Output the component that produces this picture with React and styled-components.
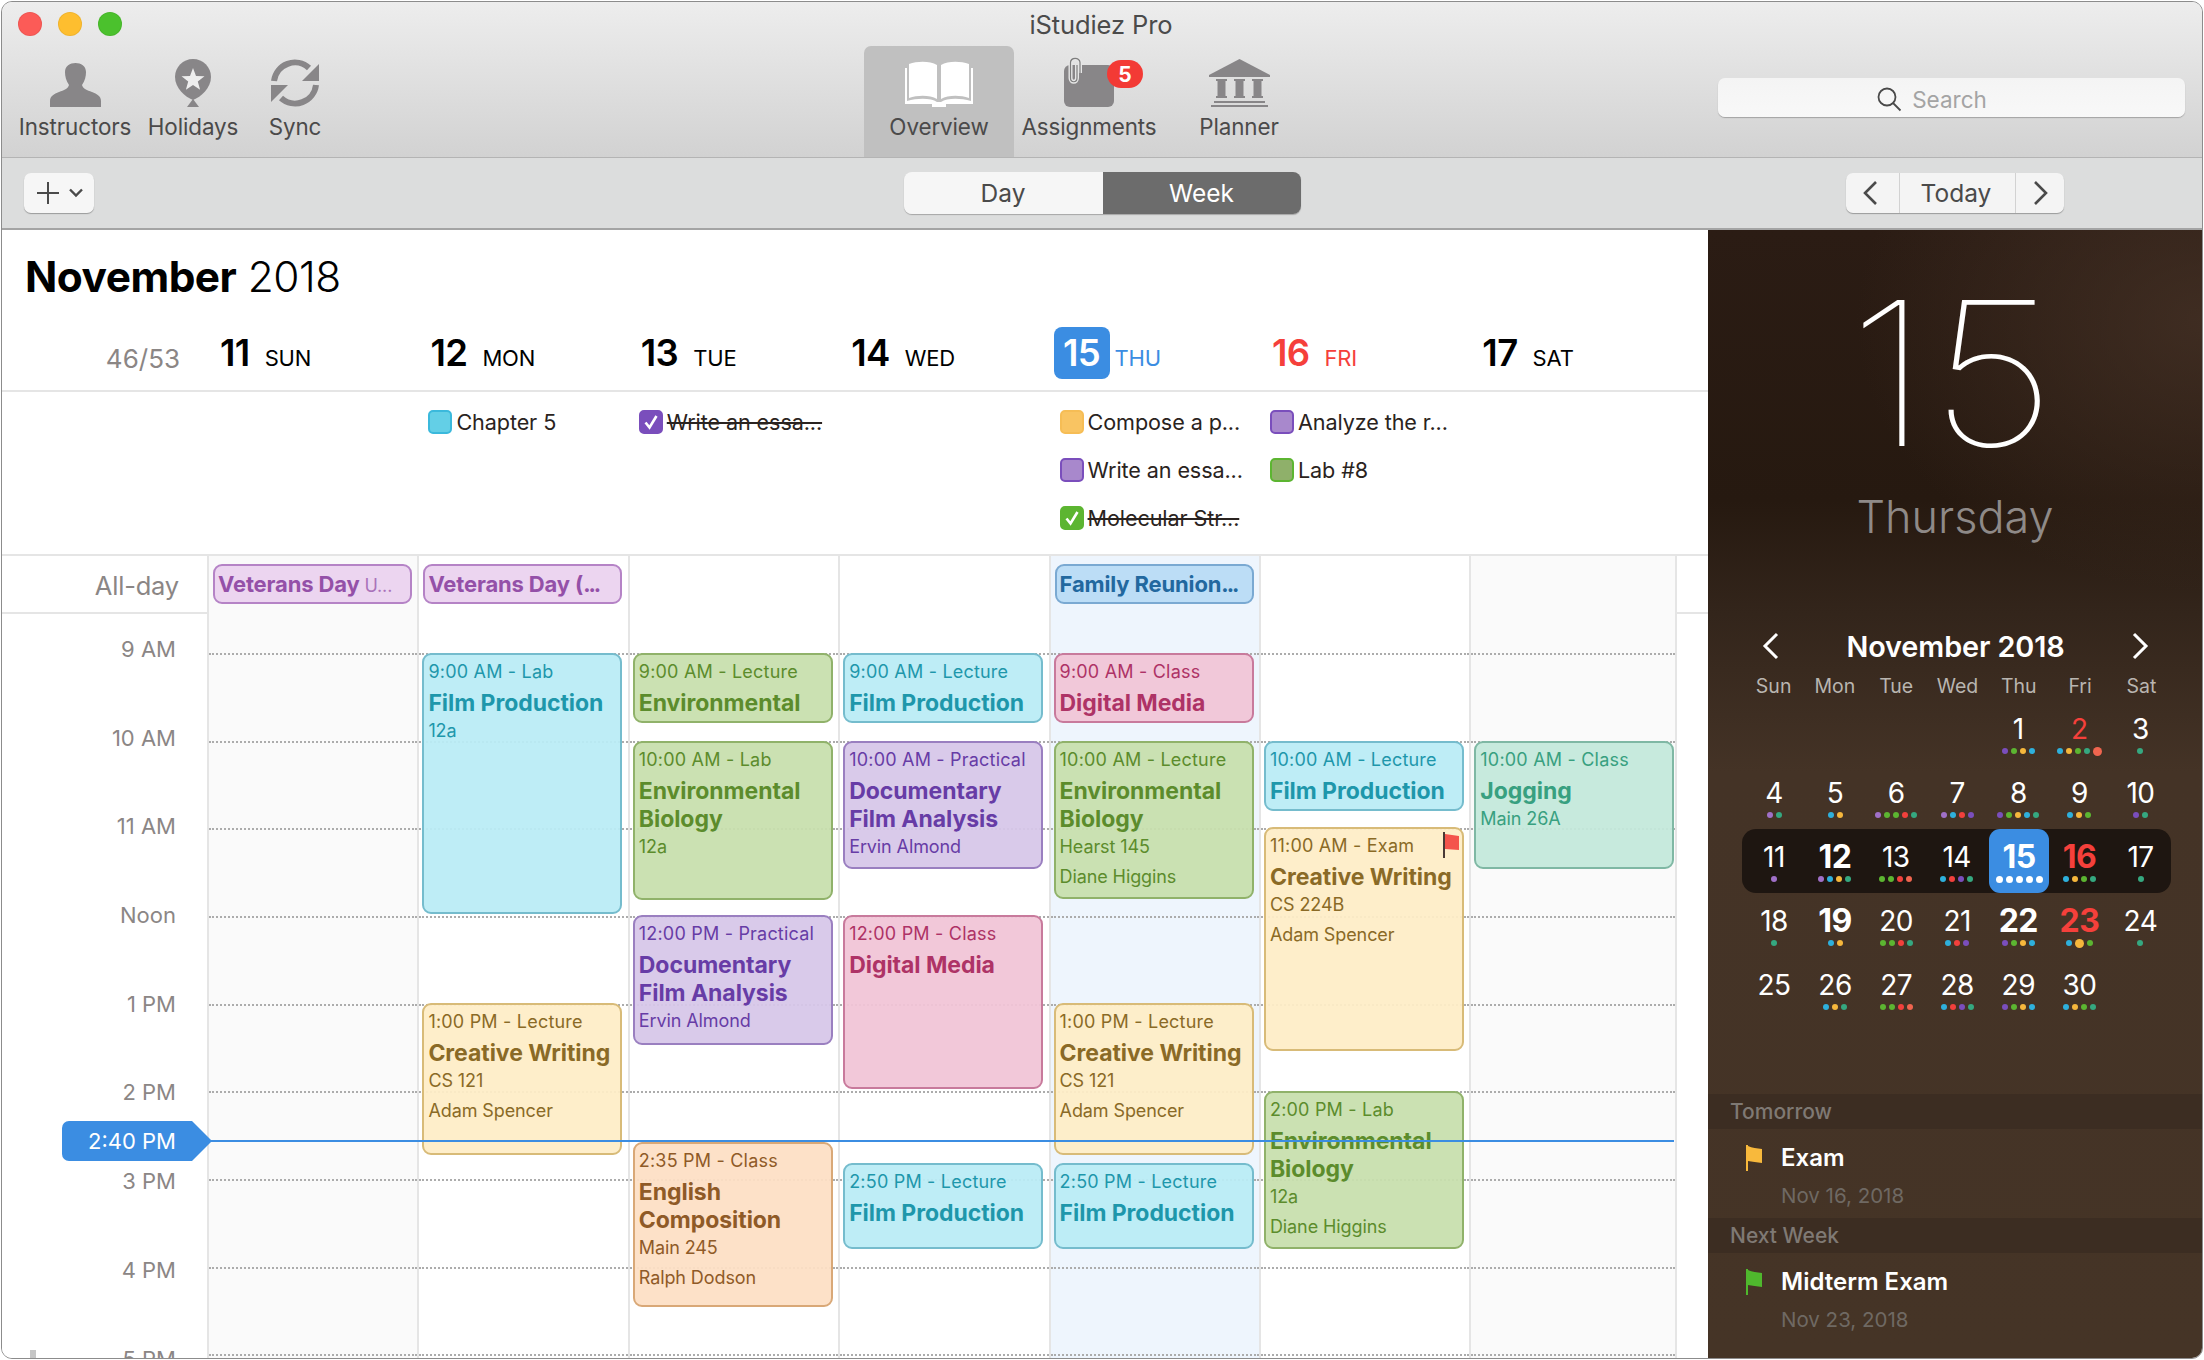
import React from 'react';
import styled, { createGlobalStyle } from 'styled-components';

const Global = createGlobalStyle`
  html, body { margin: 0; padding: 0; background: #fff; }
  * { box-sizing: border-box; }
  body { font-family: Inter, "Noto Sans", "Liberation Sans", sans-serif; -webkit-font-smoothing: antialiased; }
`;

const COLS = '205px repeat(6, 210.4px) 208px';

const Window = styled.div`
  position: relative; width: 2202px; height: 1358px; margin: 1px;
  border: 1px solid #8c8c8c; border-radius: 11px; overflow: hidden;
  display: flex; flex-direction: column; background: #fff;
`;
const TitleBar = styled.header`
  height: 156px; flex: none; border-bottom: 1px solid #b4b4b4;
  background: linear-gradient(180deg, #ededed 0%, #d2d2d2 100%);
  display: flex; flex-direction: column;
`;
const TitleRow = styled.div`
  height: 44px; flex: none; display: grid; grid-template-columns: 1fr auto 1fr; align-items: center; padding: 0 18px 0 16px;
`;
const Lights = styled.div`display: flex; gap: 16px;`;
const Light = styled.span`width: 24px; height: 24px; border-radius: 50%; background: ${p => p.$c}; box-shadow: inset 0 0 0 1px rgba(0,0,0,.06);`;
const AppTitle = styled.div`font-size: 25.5px; color: #4b4b4b; letter-spacing: -.1px;`;
const ToolRow = styled.div`flex: 1; display: flex; padding-left: 13px; padding-right: 17px;`;
const ToolGroup = styled.div`display: flex; margin-left: ${p => p.$ml || 0}px;`;
const Tool = styled.div`
  width: ${p => p.$w || 150}px; position: relative; display: flex; flex-direction: column; align-items: center; justify-content: flex-end;
  padding-bottom: 17px; border-radius: 7px 7px 0 0; background: ${p => p.$active ? '#c0c0c0' : 'transparent'};
`;
const ToolIcon = styled.div`height: 50px; display: flex; align-items: flex-end; justify-content: center; position: relative;`;
const ToolLabel = styled.div`font-size: 22.4px; line-height: 26px; margin-top: 7px; color: #4b4a4a; white-space: nowrap; letter-spacing: -.1px;`;
const Badge = styled.span`
  position: absolute; left: 43px; top: 3px; width: 36px; height: 28px; border-radius: 14px; background: #f33a35;
  color: #fff; font-size: 21px; font-weight: 700; display: flex; align-items: center; justify-content: center;
`;
const SearchBox = styled.div`
  margin-left: auto; margin-top: 32px; width: 467px; height: 39px; border-radius: 7px; background: linear-gradient(180deg, #f4f4f4, #f8f8f8);
  box-shadow: 0 1px 1px rgba(0,0,0,.25); display: flex; align-items: center; justify-content: center; gap: 10px; color: #a4a4a4; font-size: 22.5px;
  padding: 3px 40px 0 0;
`;
const Toolbar = styled.div`
  height: 72px; flex: none; border-bottom: 2px solid #a4a4a4; background: #dcdddd;
  display: grid; grid-template-columns: 1fr auto 1fr; align-items: center; padding: 0 22px;
`;
const PlainBtn = styled.div`
  width: 70px; height: 40px; border-radius: 7px; background: #f6f6f6; box-shadow: 0 1px 1px rgba(0,0,0,.3);
  display: flex; align-items: center; justify-content: center; gap: 9px;
`;
const Segments = styled.div`
  display: flex; width: 397px; height: 42px; border-radius: 8px; overflow: hidden; box-shadow: 0 1px 1px rgba(0,0,0,.25);
`;
const Segment = styled.div`
  width: ${p => p.$w}px; display: flex; align-items: center; justify-content: center; font-size: 24.5px;
  background: ${p => p.$on ? '#6c6c6c' : '#f6f6f6'}; color: ${p => p.$on ? '#fff' : '#4a4a4a'};
`;
const NavGroup = styled.div`
  justify-self: end; margin-right: 116px; display: flex; width: 218px; height: 40px; border-radius: 7px; background: #f4f4f4; box-shadow: 0 1px 1px rgba(0,0,0,.3); overflow: hidden;
`;
const NavCell = styled.div`
  width: ${p => p.$w}px; display: flex; align-items: center; justify-content: center; font-size: 24.5px; color: #4a4a4a;
  border-left: ${p => p.$sep ? '1px solid #d2d2d2' : 'none'}; padding: 0 ${p => p.$pr || 0}px 0 ${p => p.$pl || 0}px;
`;
const Body = styled.div`flex: 1; display: flex; min-height: 0;`;
const Main = styled.main`position: relative; width: 1706px; flex: none; display: flex; flex-direction: column; background: #fff;`;
const Head = styled.div`height: 162px; flex: none; border-bottom: 2px solid #e5e5e5; padding: 20px 0 0 23px;`;
const MonthTitle = styled.div`
  font-size: 42.4px; line-height: 54px; color: #000; font-weight: 300; letter-spacing: -.5px;
  b { font-weight: 700; }
`;
const WeekGrid = styled.div`display: grid; grid-template-columns: ${COLS}; margin: 23px 0 0 -23px; height: 52px;`;
const WeekNo = styled.div`font-size: 26px; line-height: 52px; text-align: right; padding: 6px 27px 0 0; color: #8b8685;`;
const DayHead = styled.div`
  display: flex; align-items: baseline; gap: ${p => p.$today ? 5 : 15}px; padding-left: ${p => p.$today ? 5 : 13}px;
  color: ${p => p.$c};
`;
const DayNum = styled.span`
  font-size: 36.5px; line-height: 52px; font-weight: 600; letter-spacing: -.6px;
  ${p => p.$today && 'width: 56px; text-align: center; border-radius: 8px; background: #3b8de2; color: #fff;'}
`;
const DayName = styled.span`font-size: 22px; line-height: 52px; letter-spacing: -.2px;`;
const TaskRow = styled.div`height: 164px; flex: none; border-bottom: 2px solid #e5e5e5; display: grid; grid-template-columns: ${COLS};`;
const TaskCell = styled.div`padding: 18px 0 0 11px; display: flex; flex-direction: column; gap: 24px;`;
const Task = styled.div`display: flex; align-items: center; gap: 4px; height: 24px;`;
const Check = styled.span`
  width: 24px; height: 24px; flex: none; border-radius: 5px; background: ${p => p.$bg}; border: 2px solid ${p => p.$b};
  display: flex; align-items: center; justify-content: center;
`;
const TaskText = styled.span`
  font-size: 21.6px; line-height: 28px; color: #2a2320; white-space: nowrap; letter-spacing: -.1px;
  ${p => p.$done && 'text-decoration: line-through; text-decoration-thickness: 2px;'}
`;
const AllDayRow = styled.div`height: 58px; flex: none; border-bottom: 2px solid #e5e5e5; display: grid; grid-template-columns: ${COLS};`;
const AllDayLabel = styled.div`font-size: 25.5px; line-height: 60px; text-align: right; padding-right: 28px; color: #8b8685; letter-spacing: -.2px;`;
const AllDayCell = styled.div`
  border-left: 2px solid #e5e5e5; ${p => p.$last && 'border-right: 2px solid #e5e5e5;'} padding: 8px 0 0 4px; background: ${p => p.$bg};
`;
const Pill = styled.div`
  width: 199px; height: 40px; border-radius: 9px; border: 2px solid ${p => p.$b}; background: ${p => p.$bg}; color: ${p => p.$c};
  font-size: 22px; line-height: 36px; font-weight: 700; padding-left: 3px; white-space: nowrap; overflow: hidden; letter-spacing: -.15px;
  small { font-size: 18px; font-weight: 400; opacity: .75; }
`;
const PillDots = styled.span`letter-spacing: -2px;`;
const Timeline = styled.div`position: relative; flex: 1; min-height: 0; overflow: hidden; display: grid; grid-template-columns: ${COLS};`;
const Gutter = styled.div`padding: 20px 31px 0 0; text-align: right;`;
const HourLabel = styled.div`height: 88.7px; font-size: 22px; line-height: 30px; color: #8b8685; white-space: nowrap;`;
const DayCol = styled.div`
  position: relative; padding-top: 39px; border-left: 2px solid #e5e5e5; ${p => p.$last && 'border-right: 2px solid #e5e5e5;'} background: ${p => p.$bg};
`;
const HourLine = styled.div`height: 87.67px; border-top: 2px dotted #acacac;`;
const Event = styled.div`
  position: absolute; left: 3px; width: 200px; border: 2px solid ${p => p.$p.b}; border-radius: 9px; background: ${p => p.$p.bg};
  color: ${p => p.$p.c}; padding: 4px 4px 0; overflow: hidden;
`;
const EvTime = styled.div`font-size: 18px; line-height: 26px; white-space: nowrap; letter-spacing: .2px;`;
const EvTitle = styled.div`font-size: 23px; line-height: 28px; font-weight: 700; margin-top: 4px; letter-spacing: -.05px; white-space: nowrap;`;
const EvDetail = styled.div`font-size: 18px; line-height: 28px; margin-top: ${p => p.$gap || 0}px; white-space: nowrap; letter-spacing: -.1px;`;
const EvFlag = styled.svg`position: absolute; right: 3px; top: 3px;`;
const NowBadge = styled.div`
  position: absolute; left: 60px; top: 507px; width: 150px; height: 40px; background: #3b8de2; color: #fff; border-radius: 7px;
  clip-path: polygon(0 0, 130px 0, 150px 20px, 130px 40px, 0 40px);
  font-size: 22px; line-height: 40px; text-align: center; padding-right: 10px; z-index: 3;
`;
const NowLine = styled.div`position: absolute; left: 205px; width: 1467px; top: 526px; height: 2px; background: #3b8de2; z-index: 3;`;
const Notch = styled.div`position: absolute; left: 28px; bottom: 0; width: 6px; height: 8px; background: #c6c6c6; z-index: 4;`;
const Side = styled.aside`
  flex: 1; display: flex; flex-direction: column; color: #fff; min-width: 0;
  background:
    radial-gradient(ellipse 70% 24% at 100% 8%, rgba(72,52,40,.7), transparent 100%),
    linear-gradient(180deg, #2b1c14 0, #261910 24%, #33251b 34%, #443326 48%, #453426 100%);
`;
const BigDay = styled.div`
  font-size: 200px; line-height: 200px; font-weight: 100; text-align: center; margin-top: 43px; padding-right: 6px; height: 200px;
  transform: scaleX(1.12);
`;
const WeekDayName = styled.div`font-size: 45px; line-height: 50px; text-align: center; color: #8f8a88; font-weight: 300; margin-top: 19px;`;
const MiniHead = styled.div`
  margin-top: 84px; display: flex; align-items: center; justify-content: space-between; padding: 0 53px 0 54px; height: 40px;
  font-size: 28.8px; font-weight: 600; letter-spacing: -.1px;
`;
const Dow = styled.div`
  margin: 8px 0 3px 35px; width: 429px; display: grid; grid-template-columns: repeat(7, 1fr); font-size: 19.5px; line-height: 24px; color: #b9b5b0; text-align: center;
`;
const MiniRow = styled.div`
  margin-left: 34px; width: 429px; height: 64px; padding-left: 1.5px; display: grid; grid-template-columns: repeat(7, 1fr);
  ${p => p.$cur && 'background: #1e1611; border-radius: 14px;'}
`;
const MiniCell = styled.div`
  justify-self: center; width: 60px; height: 64px; padding-top: 12px; display: flex; flex-direction: column; align-items: center; border-radius: 11px;
  ${p => p.$sel && 'background: #3b8de2; margin-left: 2px;'}
  color: ${p => p.$red ? '#f5403b' : '#fff'};
`;
const MiniNum = styled.div`font-size: ${p => p.$bold ? 32 : 28}px; line-height: 32px; font-weight: ${p => p.$bold ? 700 : 400}; letter-spacing: -.5px;`;
const Dots = styled.div`display: flex; gap: 3px; height: 8px; align-items: center; margin-top: 2px; justify-content: center;`;
const Dot = styled.span`width: ${p => p.$s}px; height: ${p => p.$s}px; border-radius: 50%; background: ${p => p.$c}; flex: none;`;
const Agenda = styled.div`margin-top: auto;`;
const Band = styled.div`height: 35px; background: #3c2d22; padding-left: 22px; font-size: 21px; line-height: 35px; color: #7f7974; font-weight: 500;`;
const AgendaItem = styled.div`height: ${p => p.$h}px; display: flex; gap: 19px; padding: 14px 0 0 38px;`;
const AgendaFlag = styled.svg`margin-top: 2px; flex: none;`;
const AgendaTitle = styled.div`font-size: 24px; line-height: 30px; font-weight: 600;`;
const AgendaDate = styled.div`font-size: 20.5px; line-height: 26px; color: #6f6963; margin-top: 10px;`;

const G = '#888688';
const PersonIcon = () => (
  <svg width="51" height="44" viewBox="0 0 51 44"><path fill={G} d="M0 44V38C0 33 4 31 9 29C14 27 18 26 19 22C16 18 15 13 15 9C15 3 20 0 25.5 0C31 0 36 3 36 9C36 13 35 18 32 22C33 26 37 27 42 29C47 31 51 33 51 38V44Z" /></svg>
);
const BalloonIcon = () => (
  <svg width="36" height="48" viewBox="0 0 36 48">
    <path fill={G} d="M18 0C28 0 36 8 36 18C36 29 26 38 18 41C10 38 0 29 0 18C0 8 8 0 18 0Z" />
    <path fill={G} d="M18 40L24 48H12Z" />
    <path fill="#eee" d="M18 9L21 17L29.5 17.3L22.8 22.5L25.1 30.7L18 26L10.9 30.7L13.2 22.5L6.5 17.3L15 17Z" />
  </svg>
);
const SyncIcon = () => (
  <svg width="48" height="48" viewBox="0 0 48 48" fill="none">
    <path stroke={G} strokeWidth="6" d="M3 22A21 21 0 0 1 38 9" />
    <path fill={G} d="M48 5V22H31Z" />
    <path stroke={G} strokeWidth="6" d="M45 26A21 21 0 0 1 10 39" />
    <path fill={G} d="M0 43V26H17Z" />
  </svg>
);
const BookIcon = () => (
  <svg width="68" height="46" viewBox="0 0 68 46">
    <path fill="#fff" d="M4 3C13 0 25 0 32 4V38C25 34 13 34 4 37Z" />
    <path fill="#fff" d="M64 3C55 0 43 0 36 4V38C43 34 55 34 64 37Z" />
    <path fill="#fff" d="M0 7H2V40C13 37 26 37 32 41H36C42 37 55 37 66 40V7H68V43H41V46H27V43H0Z" />
  </svg>
);
const NoteIcon = () => (
  <svg width="50" height="50" viewBox="0 0 50 50" fill="none">
    <rect x="0" y="8" width="50" height="42" rx="6" fill={G} />
    <path stroke="#e6e6e6" strokeWidth="4" d="M16 16V5.5C16 0 6.5 0 6.5 5.5V21C6.5 26 13 26 13 21V8" />
    <path stroke="#7d7d7d" strokeWidth="1.2" d="M16 16V5.5C16 0 6.5 0 6.5 5.5V21C6.5 26 13 26 13 21V8" />
  </svg>
);
const BankIcon = () => (
  <svg width="61" height="48" viewBox="0 0 61 48">
    <path fill={G} d="M30.5 0L61 16V18H0V16Z" />
    <path fill={G} d="M7 20H18V22H16.5V37H18V39H7V37H8.5V22H7ZM25 20H36V22H34.500V37H36V39H25V37H26.500V22H25ZM43 20H54V22H52.500V37H54V39H43V37H44.500V22H43Z" />
    <rect x="5" y="42" width="51" height="2" fill={G} />
    <rect x="2" y="46" width="57" height="2" fill={G} />
  </svg>
);
const Stroke = ({ w = 20, h = 20, d, sw = 2.5, c = '#4a4a4a' }) => (
  <svg width={w} height={h} viewBox={`0 0 ${w} ${h}`} fill="none"><path d={d} stroke={c} strokeWidth={sw} /></svg>
);
const CheckMark = () => (
  <svg width="18" height="18" viewBox="0 0 18 18" fill="none"><path d="M3.500 9.500L7.500 14.500L14.500 3" stroke="#fff" strokeWidth="2.600" /></svg>
);
const Flag = ({ c }) => (
  <AgendaFlag width="16" height="26" viewBox="0 0 16 26"><rect width="2" height="26" fill={c} /><path fill={c} d="M2 1C6 3 11 3 16 4V18C11 17 6 17 2 16Z" /></AgendaFlag>
);

const cy = { bg: '#b9ecf5ee', b: '#75bccd', c: '#1e97ab' };
const gr = { bg: '#c7dfacee', b: '#90b26a', c: '#5c8c2c' };
const pu = { bg: '#d6c6e8ee', b: '#9a7fc0', c: '#673ca6' };
const pi = { bg: '#f1c4d6ee', b: '#c87a9c', c: '#ae3366' };
const ye = { bg: '#feedc6ee', b: '#d8bb78', c: '#8a6a26' };
const or = { bg: '#fddfc4ee', b: '#d9a877', c: '#8f5a27' };
const te = { bg: '#c3e8dbee', b: '#7fb8a4', c: '#38a080' };

const days = [
  { n: '11', d: 'SUN', c: '#000', bg: '#fafafa', tasks: [], pill: { t: 'Veterans Day', s: ' U...', b: '#b583c6', bg: '#ecd5f0', c: '#9450a8' }, ev: [] },
  { n: '12', d: 'MON', c: '#000', bg: '#fff', pill: { t: 'Veterans Day (', dots: 1, b: '#b583c6', bg: '#ecd5f0', c: '#9450a8' },
    tasks: [{ t: 'Chapter 5', bg: '#63cfe6', b: '#3bb9dc' }],
    ev: [
      { y: [653, 914], p: cy, time: '9:00 AM - Lab', title: ['Film Production'], det: ['12a'] },
      { y: [1003, 1155], p: ye, time: '1:00 PM - Lecture', title: ['Creative Writing'], det: ['CS 121', 'Adam Spencer'] },
    ] },
  { n: '13', d: 'TUE', c: '#000', bg: '#fff', tasks: [{ t: 'Write an essa...', bg: '#7a4ebc', b: '#7a4ebc', done: 1 }],
    ev: [
      { y: [653, 723], p: gr, time: '9:00 AM - Lecture', title: ['Environmental'], det: [] },
      { y: [741, 900], p: gr, time: '10:00 AM - Lab', title: ['Environmental', 'Biology'], det: ['12a'] },
      { y: [915, 1045], p: pu, time: '12:00 PM - Practical', title: ['Documentary', 'Film Analysis'], det: ['Ervin Almond'] },
      { y: [1142, 1307], p: or, time: '2:35 PM - Class', title: ['English', 'Composition'], det: ['Main 245', 'Ralph Dodson'] },
    ] },
  { n: '14', d: 'WED', c: '#000', bg: '#fff', tasks: [],
    ev: [
      { y: [653, 723], p: cy, time: '9:00 AM - Lecture', title: ['Film Production'], det: [] },
      { y: [741, 869], p: pu, time: '10:00 AM - Practical', title: ['Documentary', 'Film Analysis'], det: ['Ervin Almond'] },
      { y: [915, 1089], p: pi, time: '12:00 PM - Class', title: ['Digital Media'], det: [] },
      { y: [1163, 1249], p: cy, time: '2:50 PM - Lecture', title: ['Film Production'], det: [] },
    ] },
  { n: '15', d: 'THU', c: '#3b8de2', today: 1, bg: '#eef5fd', pill: { t: 'Family Reunion', dots: 1, b: '#7aa9d2', bg: '#bcddf6', c: '#22689f' },
    tasks: [
      { t: 'Compose a p...', bg: '#f9c462', b: '#f6bd55' },
      { t: 'Write an essa...', bg: '#a888cc', b: '#7a4ebc' },
      { t: 'Molecular Str...', bg: '#5cb531', b: '#5cb531', done: 1 },
    ],
    ev: [
      { y: [653, 723], p: pi, time: '9:00 AM - Class', title: ['Digital Media'], det: [] },
      { y: [741, 899], p: gr, time: '10:00 AM - Lecture', title: ['Environmental', 'Biology'], det: ['Hearst 145', 'Diane Higgins'] },
      { y: [1003, 1155], p: ye, time: '1:00 PM - Lecture', title: ['Creative Writing'], det: ['CS 121', 'Adam Spencer'] },
      { y: [1163, 1249], p: cy, time: '2:50 PM - Lecture', title: ['Film Production'], det: [] },
    ] },
  { n: '16', d: 'FRI', c: '#f5403b', bg: '#fff',
    tasks: [{ t: 'Analyze the r...', bg: '#a888cc', b: '#7a4ebc' }, { t: 'Lab #8', bg: '#8fb06a', b: '#5cb531' }],
    ev: [
      { y: [741, 811], p: cy, time: '10:00 AM - Lecture', title: ['Film Production'], det: [] },
      { y: [827, 1051], p: ye, time: '11:00 AM - Exam', title: ['Creative Writing'], det: ['CS 224B', 'Adam Spencer'], flag: 1 },
      { y: [1091, 1249], p: gr, time: '2:00 PM - Lab', title: ['Environmental', 'Biology'], det: ['12a', 'Diane Higgins'] },
    ] },
  { n: '17', d: 'SAT', c: '#000', bg: '#fafafa', tasks: [], last: 1,
    ev: [{ y: [741, 869], p: te, time: '10:00 AM - Class', title: ['Jogging'], det: ['Main 26A'] }] },
];
const hours = ['9 AM', '10 AM', '11 AM', 'Noon', '1 PM', '2 PM', '3 PM', '4 PM', '5 PM'];
const TOP = 614;

const P = '#7a4ebc', N = '#5cb531', Y = '#f6b73c', B = '#2eb0dc', T = '#35a880', R = '#f2403c', L = '#a070c8', O = '#f0654f';
const dotMap = {
  1: [P, N, Y, B], 2: [B, Y, N, T, O + '!'], 3: [T], 4: [L, T], 5: [B, Y], 6: [L, N, N, R, T], 7: [L, B, R, P], 8: [P, N, Y, B, T], 9: [B, Y, N], 10: [P, T],
  11: [L], 12: [L, B, Y, T], 13: [N, N, R, O], 14: [B, R, P, T], 15: ['#fff', '#fff', '#fff', '#fff', '#fff'], 16: [B, Y, N, T], 17: [T],
  18: [T], 19: [B, Y], 20: [N, N, R, T], 21: [B, R, P], 22: [P, N, Y, B], 23: [B, Y + '!', N], 24: [T],
  25: [], 26: [B, Y, T], 27: [N, N, R, O], 28: [B, R, P, T], 29: [P, N, Y, B], 30: [B, Y, N, T],
};
const weeks = [
  [0, 0, 0, 0, 1, 2, 3], [4, 5, 6, 7, 8, 9, 10], [11, 12, 13, 14, 15, 16, 17], [18, 19, 20, 21, 22, 23, 24], [25, 26, 27, 28, 29, 30, 0],
];
const boldDays = [12, 15, 16, 19, 22, 23];
const redDays = [2, 16, 23];

export default function App() {
  return (
    <>
      <Global />
      <Window>
        <TitleBar>
          <TitleRow>
            <Lights><Light $c="#fc5b57" /><Light $c="#febe2f" /><Light $c="#4bc12d" /></Lights>
            <AppTitle>iStudiez Pro</AppTitle>
            <span />
          </TitleRow>
          <ToolRow>
            <ToolGroup>
              <Tool $w={120}><ToolIcon><PersonIcon /></ToolIcon><ToolLabel>Instructors</ToolLabel></Tool>
              <Tool $w={116}><ToolIcon><BalloonIcon /></ToolIcon><ToolLabel>Holidays</ToolLabel></Tool>
              <Tool $w={88}><ToolIcon><SyncIcon /></ToolIcon><ToolLabel>Sync</ToolLabel></Tool>
            </ToolGroup>
            <ToolGroup $ml={525}>
              <Tool $active><ToolIcon><BookIcon /></ToolIcon><ToolLabel>Overview</ToolLabel></Tool>
              <Tool><ToolIcon><NoteIcon /><Badge>5</Badge></ToolIcon><ToolLabel>Assignments</ToolLabel></Tool>
              <Tool><ToolIcon><BankIcon /></ToolIcon><ToolLabel>Planner</ToolLabel></Tool>
            </ToolGroup>
            <SearchBox>
              <svg width="26" height="26" viewBox="0 0 26 26" fill="none"><circle cx="11" cy="11" r="8.500" stroke="#4a4a4a" strokeWidth="1.800" /><path d="M17 17L24.500 24.500" stroke="#4a4a4a" strokeWidth="1.800" /></svg>
              <span>Search</span>
            </SearchBox>
          </ToolRow>
        </TitleBar>
        <Toolbar>
          <PlainBtn>
            <Stroke w={24} h={24} d="M12 1V23M1 12H23" sw={2} />
            <Stroke w={14} h={10} d="M1 1.500L7 7.500L13 1.500" sw={2.400} />
          </PlainBtn>
          <Segments><Segment $w={199}>Day</Segment><Segment $w={198} $on>Week</Segment></Segments>
          <NavGroup>
            <NavCell $w={53} $pr={5}><Stroke w={16} h={26} d="M14 2L3 13L14 24" sw={2.600} /></NavCell>
            <NavCell $w={116} $sep $pr={3}>Today</NavCell>
            <NavCell $w={49} $sep $pl={2}><Stroke w={16} h={26} d="M2 2L13 13L2 24" sw={2.600} /></NavCell>
          </NavGroup>
        </Toolbar>
        <Body>
          <Main>
            <Head>
              <MonthTitle><b>November</b> 2018</MonthTitle>
              <WeekGrid>
                <WeekNo>46/53</WeekNo>
                {days.map(d => (
                  <DayHead key={d.n} $today={d.today} $c={d.c}>
                    <DayNum $today={d.today}>{d.n}</DayNum>
                    <DayName>{d.d}</DayName>
                  </DayHead>
                ))}
              </WeekGrid>
            </Head>
            <TaskRow>
              <span />
              {days.map(d => (
                <TaskCell key={d.n}>
                  {d.tasks.map(t => (
                    <Task key={t.t}>
                      <Check $bg={t.bg} $b={t.b}>{t.done && <CheckMark />}</Check>
                      <TaskText $done={t.done}>{t.t}</TaskText>
                    </Task>
                  ))}
                </TaskCell>
              ))}
            </TaskRow>
            <AllDayRow>
              <AllDayLabel>All-day</AllDayLabel>
              {days.map(d => (
                <AllDayCell key={d.n} $bg={d.bg} $last={d.last}>
                  {d.pill && (
                    <Pill $b={d.pill.b} $bg={d.pill.bg} $c={d.pill.c}>
                      {d.pill.t}{d.pill.dots && <PillDots>...</PillDots>}{d.pill.s && <small>{d.pill.s}</small>}
                    </Pill>
                  )}
                </AllDayCell>
              ))}
            </AllDayRow>
            <Timeline>
              <Gutter>{hours.map(h => <HourLabel key={h}>{h}</HourLabel>)}</Gutter>
              {days.map(d => (
                <DayCol key={d.n} $bg={d.bg} $last={d.last}>
                  {hours.map(h => <HourLine key={h} />)}
                  {d.ev.map(e => (
                    <Event key={e.time} $p={e.p} style={{ top: e.y[0] - TOP, height: e.y[1] - e.y[0] }}>
                      <EvTime>{e.time}</EvTime>
                      <EvTitle>{e.title.map((t, i) => <div key={i}>{t}</div>)}</EvTitle>
                      {e.det.map((t, i) => <EvDetail key={t} $gap={i ? 2 : 0}>{t}</EvDetail>)}
                      {e.flag && (
                        <EvFlag width="16" height="26" viewBox="0 0 16 26"><rect width="2" height="26" fill="#4a3a36" /><path fill="#f4544c" d="M2 2L16 4V18L2 17Z" /></EvFlag>
                      )}
                    </Event>
                  ))}
                </DayCol>
              ))}
              <NowBadge>2:40 PM</NowBadge>
              <NowLine />
            </Timeline>
            <Notch />
          </Main>
          <Side>
            <BigDay>15</BigDay>
            <WeekDayName>Thursday</WeekDayName>
            <MiniHead>
              <Stroke w={18} h={28} d="M15 2L3 14L15 26" sw={3} c="#fff" />
              <span>November 2018</span>
              <Stroke w={18} h={28} d="M3 2L15 14L3 26" sw={3} c="#fff" />
            </MiniHead>
            <Dow>{['Sun', 'Mon', 'Tue', 'Wed', 'Thu', 'Fri', 'Sat'].map(s => <span key={s}>{s}</span>)}</Dow>
            {weeks.map((w, i) => (
              <MiniRow key={i} $cur={i === 2}>
                {w.map((n, j) => n === 0 ? <span key={j} /> : (
                  <MiniCell key={j} $sel={n === 15} $red={redDays.includes(n)}>
                    <MiniNum $bold={boldDays.includes(n)}>{n}</MiniNum>
                    <Dots>
                      {dotMap[n].map((c, k) => {
                        const big = c.endsWith('!');
                        return <Dot key={k} $c={c.replace('!', '')} $s={big ? 9 : n === 15 ? 7 : 6} />;
                      })}
                    </Dots>
                  </MiniCell>
                ))}
              </MiniRow>
            ))}
            <Agenda>
              <Band>Tomorrow</Band>
              <AgendaItem $h={89}>
                <Flag c="#f8b93c" />
                <div><AgendaTitle>Exam</AgendaTitle><AgendaDate>Nov 16, 2018</AgendaDate></div>
              </AgendaItem>
              <Band>Next Week</Band>
              <AgendaItem $h={105}>
                <Flag c="#4fb82d" />
                <div><AgendaTitle>Midterm Exam</AgendaTitle><AgendaDate>Nov 23, 2018</AgendaDate></div>
              </AgendaItem>
            </Agenda>
          </Side>
        </Body>
      </Window>
    </>
  );
}
